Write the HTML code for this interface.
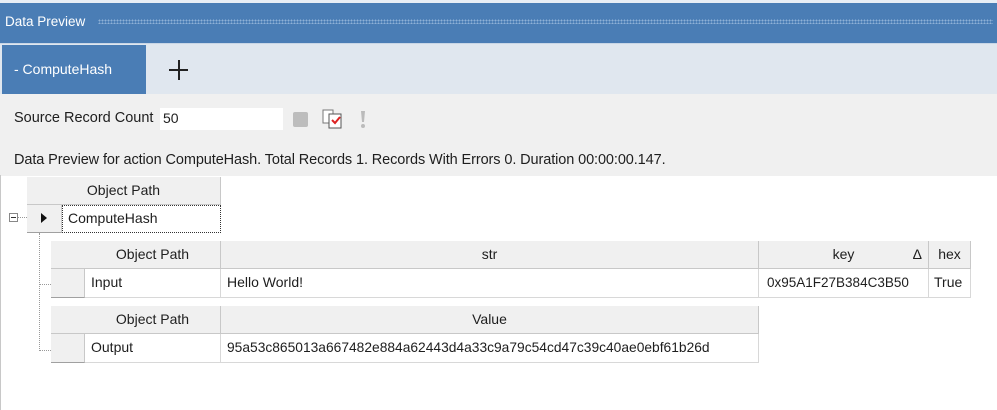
<!DOCTYPE html>
<html><head><style>
*{box-sizing:border-box;margin:0;padding:0}
body{width:997px;height:410px;overflow:hidden;background:#fff;font-family:"Liberation Sans",sans-serif;font-size:14px;color:#1e1e1e;position:relative}
.a{position:absolute}
.h{position:absolute;background:#f0f0f0;border-right:1px solid #c8c8c8;border-bottom:1px solid #c8c8c8;text-align:center;line-height:27px}
.c{position:absolute;background:#fff;border-right:1px solid #d8d8d8;border-bottom:1px solid #d8d8d8;line-height:27px;padding-left:6px;white-space:nowrap}
.rh{position:absolute;background:#f0f0f0;border-right:1px solid #c8c8c8;border-bottom:1px solid #a0a0a0}
</style></head><body>
<div class="a" style="left:0;top:0;width:997px;height:3px;background:#e8eef5"></div>
<div class="a" style="left:0;top:3px;width:997px;height:40px;background:#4a7db5"></div>
<div class="a" style="left:5px;top:14px;color:#fff;font-size:13.5px">Data Preview</div>
<div class="a" style="left:98px;top:19px;width:895px;height:5px;background-image:radial-gradient(circle,#8fb1d6 0.8px,transparent 1px);background-size:3px 3px"></div>
<div class="a" style="left:0;top:43px;width:997px;height:1px;background:#c8d6e6"></div>
<div class="a" style="left:0;top:44px;width:997px;height:50px;background:#e0e7ef"></div>
<div class="a" style="left:2px;top:45px;width:144px;height:49px;background:#4a7db5;color:#fff;line-height:49px;padding-left:12px;font-size:14px">- ComputeHash</div>
<div class="a" style="left:169px;top:69px;width:19px;height:2px;background:#222"></div>
<div class="a" style="left:178px;top:60px;width:2px;height:20px;background:#222"></div>
<div class="a" style="left:0;top:94px;width:997px;height:82px;background:#f0f0f0"></div>
<div class="a" style="left:14px;top:110px;font-size:14.5px">Source Record Count</div>
<div class="a" style="left:160px;top:108px;width:123px;height:22px;background:#fff;padding:2px 3px">50</div>
<div class="a" style="left:293px;top:112px;width:15px;height:15px;background:#bdbdbd;border-radius:2px"></div>
<svg class="a" style="left:322px;top:109px" width="24" height="22"><rect x="1" y="1" width="10" height="13" fill="#fff" stroke="#777"/><rect x="7" y="5" width="12" height="14" fill="#fff" stroke="#555"/><path d="M10 11l3 3 5-6" stroke="#d22" stroke-width="2" fill="none"/></svg>
<svg class="a" style="left:358px;top:110px" width="10" height="20"><path d="M3 1h4l-1 11h-2z" fill="#bbb"/><circle cx="5" cy="16" r="2" fill="#bbb"/></svg>
<div class="a" style="left:14px;top:152px;font-size:14.5px;letter-spacing:-0.1px">Data Preview for action ComputeHash. Total Records 1. Records With Errors 0. Duration 00:00:00.147.</div>
<div class="a" style="left:0;top:175px;width:1px;height:235px;background:#c8c8c8"></div>
<div class="h" style="left:27px;top:177px;width:194px;height:28px">Object Path</div>
<div class="rh" style="left:27px;top:205px;width:35px;height:28px"></div>
<div class="a" style="left:41px;top:213px;width:0;height:0;border-left:6px solid #111;border-top:5px solid transparent;border-bottom:5px solid transparent"></div>
<div class="c" style="left:62px;top:205px;width:159px;height:28px;border:1px dotted #333;line-height:24px;padding-left:5px">ComputeHash</div>
<div class="a" style="left:9px;top:213px;width:9px;height:9px;border:1px solid #888;background:#fff"></div>
<div class="a" style="left:11px;top:217px;width:5px;height:1px;background:#333"></div>
<div class="a" style="left:18px;top:217px;width:9px;border-top:1px dotted #999"></div>
<div class="a" style="left:39px;top:233px;height:118px;border-left:1px dotted #999"></div>
<div class="a" style="left:39px;top:284px;width:12px;border-top:1px dotted #999"></div>
<div class="a" style="left:39px;top:350px;width:12px;border-top:1px dotted #999"></div>
<div class="h" style="left:51px;top:241px;width:34px;height:28px;border-right:none"></div>
<div class="h" style="left:85px;top:241px;width:136px;height:28px">Object Path</div>
<div class="h" style="left:221px;top:241px;width:538px;height:28px">str</div>
<div class="h" style="left:759px;top:241px;width:170px;height:28px">key<span style="position:absolute;right:6px">Δ</span></div>
<div class="h" style="left:929px;top:241px;width:42px;height:28px">hex</div>
<div class="rh" style="left:51px;top:269px;width:34px;height:29px"></div>
<div class="c" style="left:85px;top:269px;width:136px;height:29px">Input</div>
<div class="c" style="left:221px;top:269px;width:538px;height:29px">Hello World!</div>
<div class="c" style="left:759px;top:269px;width:170px;height:29px;padding-left:8px;font-size:13.5px">0x95A1F27B384C3B50</div>
<div class="c" style="left:929px;top:269px;width:42px;height:29px;padding-left:5px">True</div>
<div class="h" style="left:51px;top:306px;width:34px;height:28px;border-right:none"></div>
<div class="h" style="left:85px;top:306px;width:136px;height:28px">Object Path</div>
<div class="h" style="left:221px;top:306px;width:538px;height:28px">Value</div>
<div class="rh" style="left:51px;top:334px;width:34px;height:29px"></div>
<div class="c" style="left:85px;top:334px;width:136px;height:29px">Output</div>
<div class="c" style="left:221px;top:334px;width:538px;height:29px;font-size:13.8px">95a53c865013a667482e884a62443d4a33c9a79c54cd47c39c40ae0ebf61b26d</div>
</body></html>
